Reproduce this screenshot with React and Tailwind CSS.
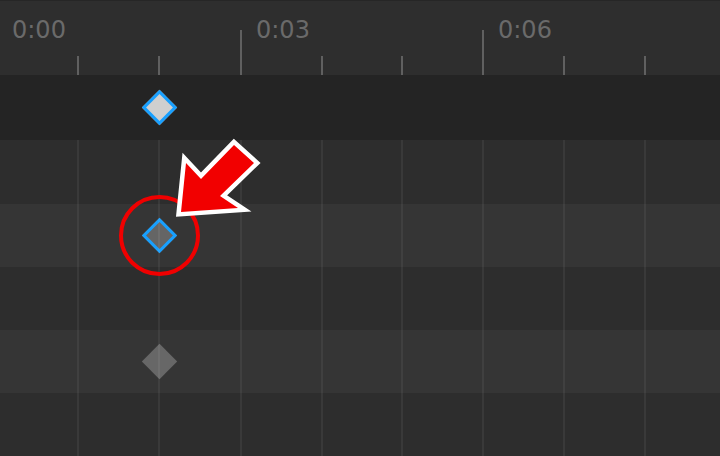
import React from "react";

const ticks = [
  { x: 77, major: false },
  { x: 158, major: false },
  { x: 240, major: true },
  { x: 321, major: false },
  { x: 401, major: false },
  { x: 482, major: true },
  { x: 563, major: false },
  { x: 644, major: false },
];

const labels = [
  { x: 12, text: "0:00" },
  { x: 256, text: "0:03" },
  { x: 498, text: "0:06" },
];

// rows under the summary row, alternating shade
const rows = [
  { h: "h-[64px]", bg: "bg-[#2d2d2d]", key: null },
  { h: "h-[63px]", bg: "bg-[#353535]", key: "selected" },
  { h: "h-[63px]", bg: "bg-[#2d2d2d]", key: null },
  { h: "h-[63px]", bg: "bg-[#353535]", key: "plain" },
  { h: "h-[63px]", bg: "bg-[#2d2d2d]", key: null },
];

function Keyframe({ kind }) {
  if (kind === "summary") {
    return <div className="ml-[147px] w-[25px] h-[25px] rotate-45 bg-[#cfcfcf] border-[3px] border-[#18a0ff]" />;
  }
  if (kind === "selected") {
    return <div className="ml-[147px] w-[25px] h-[25px] rotate-45 bg-[#656565] border-[3px] border-[#18a0ff]" />;
  }
  return <div className="ml-[147px] w-[25px] h-[25px] rotate-45 bg-[#676767]" />;
}

export default function App() {
  return (
    <div className="relative w-[720px] h-[456px] overflow-hidden bg-[#2d2d2d] font-['DejaVu_Sans',sans-serif]">
      {/* ruler */}
      <div className="relative h-[75px] bg-[#2e2e2e] border-t border-[#262626]">
        {labels.map((l) => (
          <span
            key={l.text}
            className="absolute top-[15px] text-[24px] leading-[28px] text-[#6a6a6a]"
            style={{ left: l.x }}
          >
            {l.text}
          </span>
        ))}
        {ticks.map((t) => (
          <div
            key={t.x}
            className={`absolute bottom-0 w-[2px] bg-[#606060] ${t.major ? "h-[45px]" : "h-[19px]"}`}
            style={{ left: t.x }}
          />
        ))}
      </div>

      {/* summary row */}
      <div className="h-[65px] bg-[#242424] flex items-center">
        <Keyframe kind="summary" />
      </div>

      {/* channel rows */}
      <div className="relative">
        {rows.map((r, i) => (
          <div key={i} className={`${r.h} ${r.bg} flex items-center`}>
            {r.key && <Keyframe kind={r.key} />}
          </div>
        ))}
        {ticks.map((t) => (
          <div
            key={t.x}
            className="absolute top-0 bottom-0 w-[2px] bg-white/[0.06]"
            style={{ left: t.x }}
          />
        ))}
      </div>

      {/* annotation */}
      <svg className="absolute inset-0 pointer-events-none" width="720" height="456" viewBox="0 0 720 456">
        <circle cx="159.5" cy="235.5" r="38.5" fill="none" stroke="#f00000" strokeWidth="4" />
        <polygon
          points="181,212 186,163 201,179 234,145 254,163 220,196 238,208"
          fill="#f20000"
          stroke="#ffffff"
          strokeWidth="9"
          strokeLinejoin="miter"
          paintOrder="stroke"
        />
      </svg>
    </div>
  );
}
